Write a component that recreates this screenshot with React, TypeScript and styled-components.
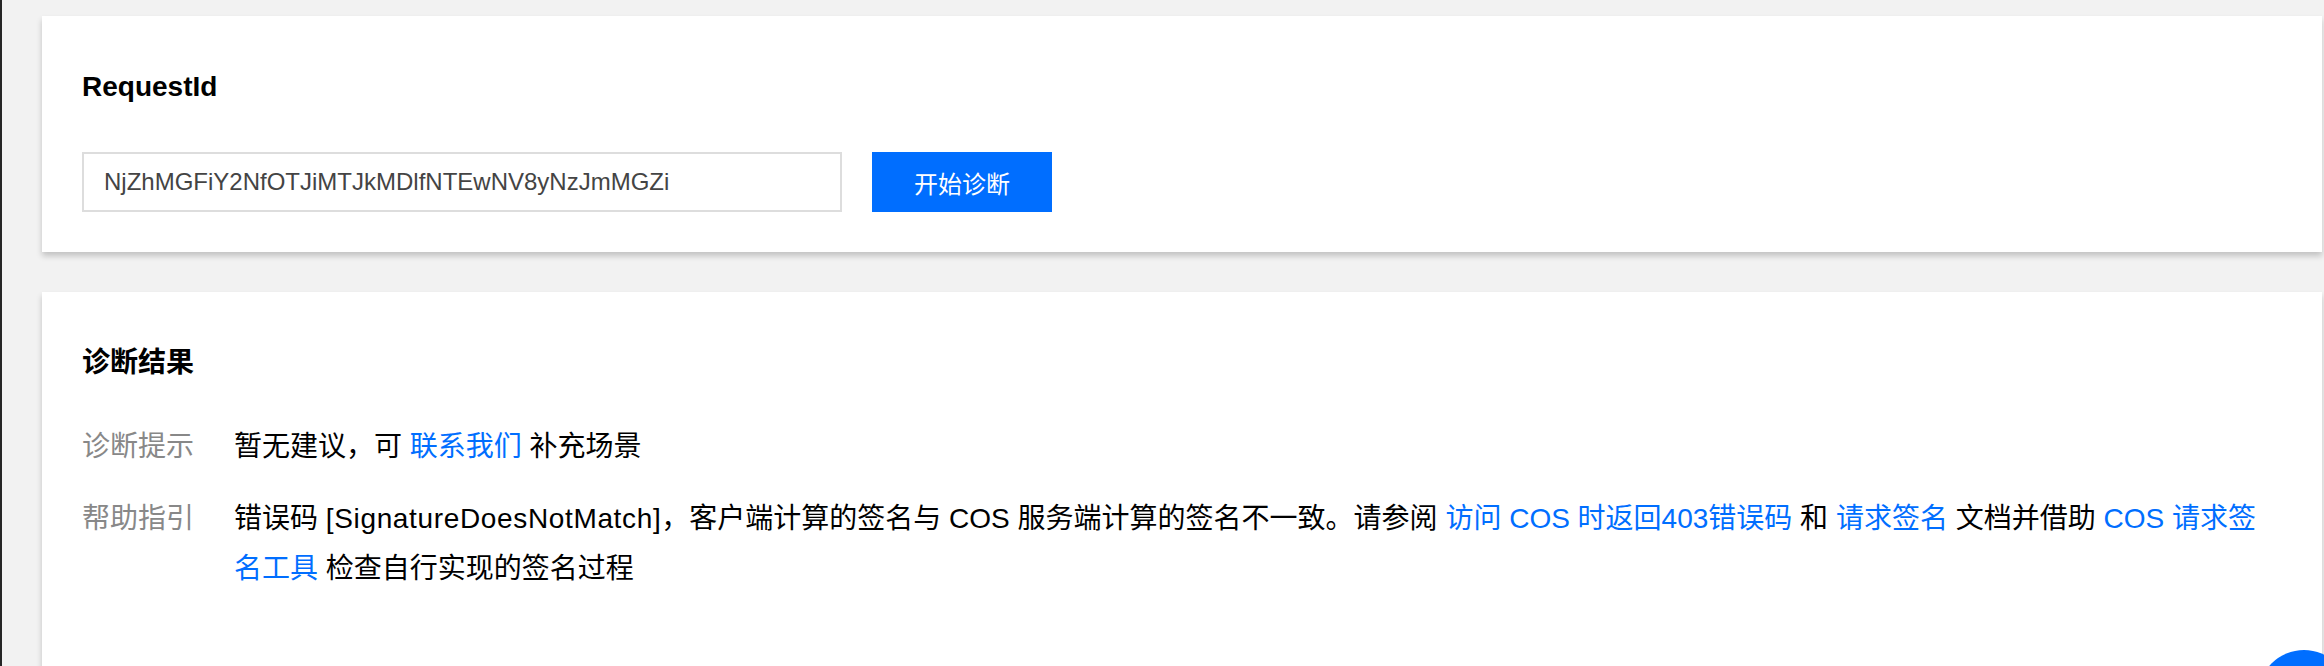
import styled, { createGlobalStyle } from "styled-components";
import { useState } from "react";

const GlobalStyle = createGlobalStyle`
    body {
        margin: 0;
        background: #f2f2f2;
        font-family: "Liberation Sans", "Noto Sans CJK SC", sans-serif;
        overflow: hidden;
    }
`;

const Page = styled.div`
    display: flex;
    min-height: 100vh;
`;

const EdgeBar = styled.div`
    width: 2px;
    flex-shrink: 0;
    background: #262626;
`;

const Main = styled.div`
    flex: 1;
    display: flex;
    flex-direction: column;
    gap: 40px;
    padding: 16px 2px 0 40px;
`;

const Card = styled.div<{ $bottom?: number }>`
    background: #fff;
    box-shadow: 0 4px 6px rgba(0, 0, 0, 0.2);
    padding: 51px 40px ${props => props.$bottom ?? 40}px 40px;
`;

const Title = styled.h3`
    margin: 0;
    font-size: 28px;
    line-height: 40px;
    font-weight: bold;
    color: #000;
`;

const SearchRow = styled.div`
    display: flex;
    align-items: center;
    gap: 30px;
    margin-top: 45px;
`;

const Input = styled.input`
    box-sizing: border-box;
    width: 760px;
    height: 60px;
    border: 2px solid #dddddd;
    padding: 0 20px;
    font-family: inherit;
    font-size: 24px;
    color: #444;
    outline: none;
`;

const Button = styled.button`
    width: 180px;
    height: 60px;
    border: none;
    background: #006eff;
    color: #fff;
    font-family: inherit;
    font-size: 24px;
    cursor: pointer;
`;

const ResultList = styled.div`
    display: flex;
    flex-direction: column;
    gap: 22px;
    margin-top: 39px;
`;

const Row = styled.div`
    display: grid;
    grid-template-columns: 152px 1fr;
    font-size: 28px;
    line-height: 50px;
`;

const Label = styled.div`
    color: #888;
`;

const Value = styled.div`
    color: #000;
`;

const ErrorCode = styled.span`
    letter-spacing: 0.65px;
`;

const Link = styled.a`
    color: #006eff;
    text-decoration: none;
    cursor: pointer;
`;

const FloatButton = styled.div`
    position: fixed;
    top: 650px;
    right: -26px;
    width: 92px;
    height: 92px;
    border-radius: 50%;
    background: #006eff;
`;

const App: React.FC = () => {
    const [requestId, setRequestId] = useState('NjZhMGFiY2NfOTJiMTJkMDlfNTEwNV8yNzJmMGZi');

    return (
        <Page>
            <GlobalStyle />
            <EdgeBar />
            <Main>
                <Card>
                    <Title>RequestId</Title>
                    <SearchRow>
                        <Input value={requestId} onChange={e => setRequestId(e.target.value)} />
                        <Button>开始诊断</Button>
                    </SearchRow>
                </Card>
                <Card $bottom={140}>
                    <Title>诊断结果</Title>
                    <ResultList>
                        <Row>
                            <Label>诊断提示</Label>
                            <Value>
                                暂无建议，可 <Link>联系我们</Link> 补充场景
                            </Value>
                        </Row>
                        <Row>
                            <Label>帮助指引</Label>
                            <Value>
                                错误码 <ErrorCode>[SignatureDoesNotMatch]</ErrorCode>，客户端计算的签名与 COS 服务端计算的签名不一致。请参阅{' '}
                                <Link>访问 COS 时返回403错误码</Link> 和 <Link>请求签名</Link> 文档并借助{' '}
                                <Link>COS 请求签名工具</Link> 检查自行实现的签名过程
                            </Value>
                        </Row>
                    </ResultList>
                </Card>
            </Main>
            <FloatButton />
        </Page>
    );
};

export default App;
